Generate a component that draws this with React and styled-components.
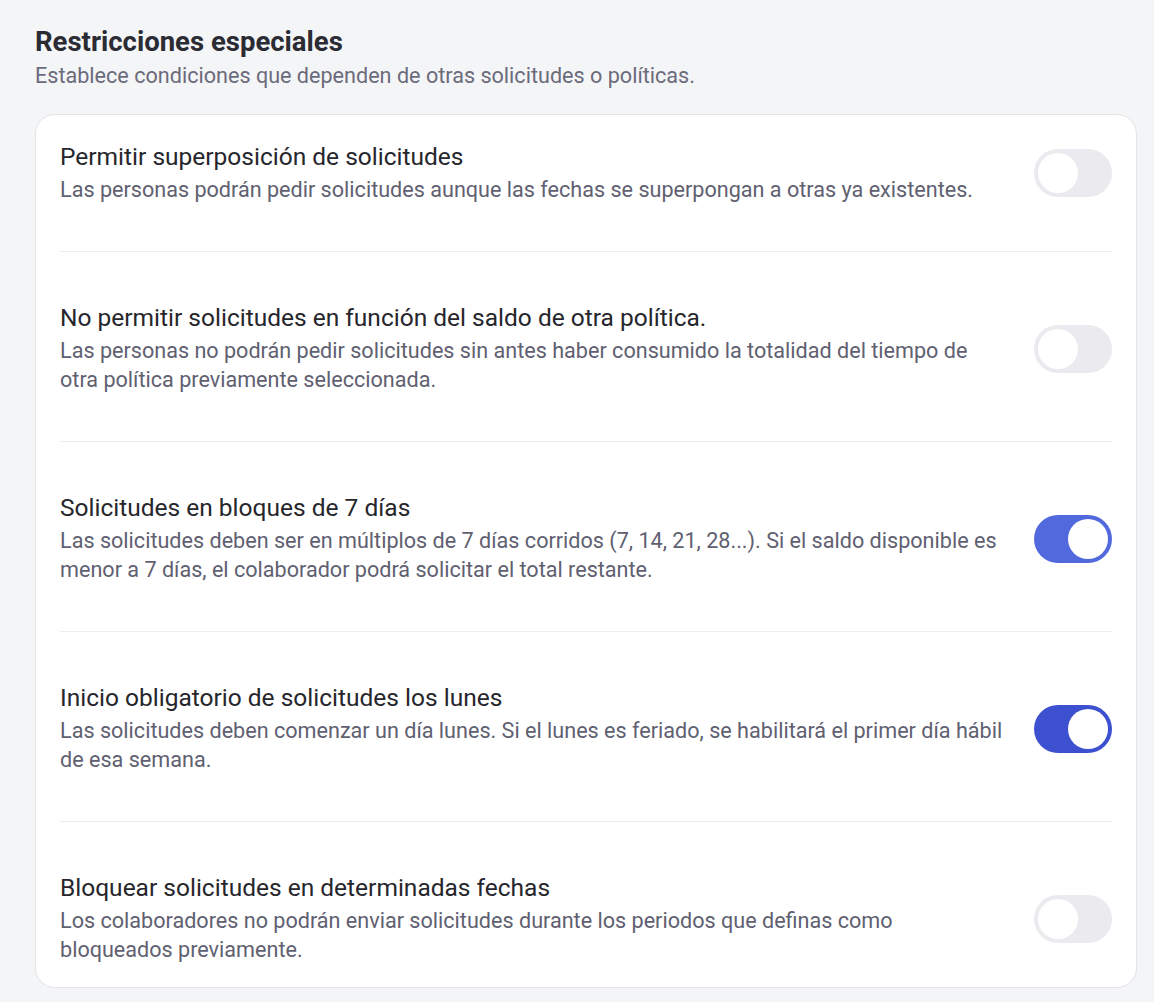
import React from 'react';
import styled, { createGlobalStyle } from 'styled-components';

const GlobalStyle = createGlobalStyle`
  * { box-sizing: border-box; }
  body {
    margin: 0;
    background: #f4f5f7;
    font-family: Roboto, "Liberation Sans", Arial, sans-serif;
  }
`;

const rules = [
  {
    title: 'Permitir superposición de solicitudes',
    text: 'Las personas podrán pedir solicitudes aunque las fechas se superpongan a otras ya existentes.',
    on: false,
  },
  {
    title: 'No permitir solicitudes en función del saldo de otra política.',
    text: 'Las personas no podrán pedir solicitudes sin antes haber consumido la totalidad del tiempo de otra política previamente seleccionada.',
    on: false,
  },
  {
    title: 'Solicitudes en bloques de 7 días',
    text: 'Las solicitudes deben ser en múltiplos de 7 días corridos (7, 14, 21, 28...). Si el saldo disponible es menor a 7 días, el colaborador podrá solicitar el total restante.',
    on: true,
    color: '#5169dc',
  },
  {
    title: 'Inicio obligatorio de solicitudes los lunes',
    text: 'Las solicitudes deben comenzar un día lunes. Si el lunes es feriado, se habilitará el primer día hábil de esa semana.',
    on: true,
    color: '#3d50d0',
  },
  {
    title: 'Bloquear solicitudes en determinadas fechas',
    text: 'Los colaboradores no podrán enviar solicitudes durante los periodos que definas como bloqueados previamente.',
    on: false,
  },
];

function Toggle({ on, color }) {
  return (
    <Track $on={on} $color={color}>
      <Knob $on={on} />
    </Track>
  );
}

export default function App() {
  return (
    <>
      <GlobalStyle />
      <Page>
        <Header>
          <Title>Restricciones especiales</Title>
          <Subtitle>Establece condiciones que dependen de otras solicitudes o políticas.</Subtitle>
        </Header>
        <Card>
          {rules.map((r, i) => (
            <React.Fragment key={r.title}>
              {i > 0 && <Divider />}
              <Row>
                <Info>
                  <RowTitle>{r.title}</RowTitle>
                  <RowText>{r.text}</RowText>
                </Info>
                <Toggle on={r.on} color={r.color} />
              </Row>
            </React.Fragment>
          ))}
        </Card>
      </Page>
    </>
  );
}

const Page = styled.div`
  padding: 26px 17px 16px 35px;
`;

const Header = styled.div`
  display: flex;
  flex-direction: column;
  gap: 5px;
  margin-bottom: 25px;
`;

const Title = styled.h2`
  margin: 0;
  font-size: 27.5px;
  line-height: 32px;
  font-weight: 700;
  color: #2b2b33;
`;

const Subtitle = styled.p`
  margin: 0;
  font-size: 21.6px;
  line-height: 26px;
  color: #6b6b7b;
`;

const Card = styled.div`
  background: #fff;
  border: 1px solid #e3e3e8;
  border-radius: 20px;
  padding: 0 24px;
`;

const Row = styled.div`
  display: flex;
  align-items: center;
  justify-content: space-between;
  gap: 24px;
  padding: 27px 0 23px;
`;

const Info = styled.div`
  display: flex;
  flex-direction: column;
  gap: 3px;
  max-width: 948px;
`;

const RowTitle = styled.div`
  font-size: 24.5px;
  line-height: 30px;
  color: #26262c;
`;

const RowText = styled.div`
  font-size: 21.6px;
  line-height: 29px;
  color: #606071;
`;

const Divider = styled.hr`
  margin: 24px 0;
  border: 0;
  border-top: 1px solid #ececef;
`;

const Track = styled.div`
  flex: none;
  width: 78px;
  height: 48px;
  border-radius: 24px;
  padding: 4px;
  display: flex;
  justify-content: ${(p) => (p.$on ? 'flex-end' : 'flex-start')};
  background: ${(p) => (p.$on ? p.$color : '#ebebef')};
`;

const Knob = styled.div`
  width: 40px;
  height: 40px;
  border-radius: 50%;
  background: #fff;
`;
